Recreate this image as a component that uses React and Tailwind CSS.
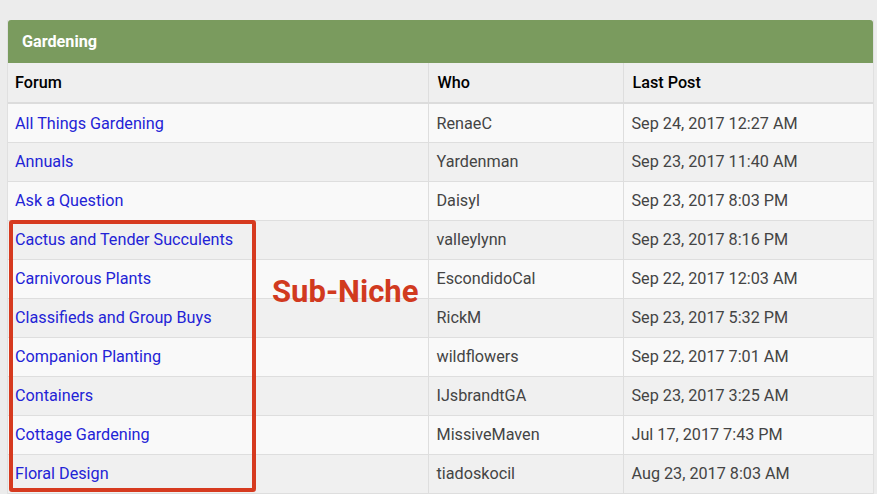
import React from 'react';

const rows = [
  { forum: 'All Things Gardening', who: 'RenaeC', last: 'Sep 24, 2017 12:27 AM' },
  { forum: 'Annuals', who: 'Yardenman', last: 'Sep 23, 2017 11:40 AM' },
  { forum: 'Ask a Question', who: 'Daisyl', last: 'Sep 23, 2017 8:03 PM' },
  { forum: 'Cactus and Tender Succulents', who: 'valleylynn', last: 'Sep 23, 2017 8:16 PM' },
  { forum: 'Carnivorous Plants', who: 'EscondidoCal', last: 'Sep 22, 2017 12:03 AM' },
  { forum: 'Classifieds and Group Buys', who: 'RickM', last: 'Sep 23, 2017 5:32 PM' },
  { forum: 'Companion Planting', who: 'wildflowers', last: 'Sep 22, 2017 7:01 AM' },
  { forum: 'Containers', who: 'IJsbrandtGA', last: 'Sep 23, 2017 3:25 AM' },
  { forum: 'Cottage Gardening', who: 'MissiveMaven', last: 'Jul 17, 2017 7:43 PM' },
  { forum: 'Floral Design', who: 'tiadoskocil', last: 'Aug 23, 2017 8:03 AM' },
];

const App = () => {
  return (
    <div className="h-[494px] overflow-hidden bg-[#ececec] pt-[20px] pl-[7px] pr-[3px] font-['Roboto',sans-serif] relative">
      {/* Panel */}
      <div className="w-[867px] border-x border-[#e0e0e0]">
        <div className="h-[43px] bg-[#7a9b5e] rounded-t-[3px] flex items-center pl-[14px] pt-[1px] text-white font-bold text-[16.2px]">
          Gardening
        </div>
        <table className="w-full border-collapse table-fixed text-[16.2px]">
          <colgroup>
            <col className="w-[420px]" />
            <col className="w-[195px]" />
            <col />
          </colgroup>
          <thead>
            <tr className="h-[40px] bg-[#efefef] border-b-2 border-[#dcdcdc] text-black">
              <th className="text-left font-medium pl-[7px] pt-[2px]">Forum</th>
              <th className="text-left font-medium pl-[9px] pt-[2px] border-l border-[#dedede]">Who</th>
              <th className="text-left font-medium pl-[9px] pt-[2px] border-l border-[#dedede]">Last Post</th>
            </tr>
          </thead>
          <tbody>
            {rows.map((row, i) => (
              <tr
                key={row.forum}
                className={`h-[39px] border-b border-[#dedede] ${i % 2 === 0 ? 'bg-[#f9f9f9]' : 'bg-[#f0f0f0]'}`}
              >
                <td className="pl-[7px] pt-[2px] text-[#2323d6]">{row.forum}</td>
                <td className="pl-[8px] pt-[2px] text-[#444] border-l border-[#dedede]">{row.who}</td>
                <td className="pl-[8px] pt-[2px] text-[#444] border-l border-[#dedede]">{row.last}</td>
              </tr>
            ))}
          </tbody>
        </table>
      </div>

      {/* Annotation */}
      <div className="absolute left-[9px] top-[220px] w-[247px] h-[272px] border-[4px] border-[#d63a1f] rounded-[3px]" />
      <div className="absolute left-[272px] top-[276px] text-[#d13a1f] font-bold text-[31px] leading-none">
        Sub-Niche
      </div>
    </div>
  );
};

export default App;
